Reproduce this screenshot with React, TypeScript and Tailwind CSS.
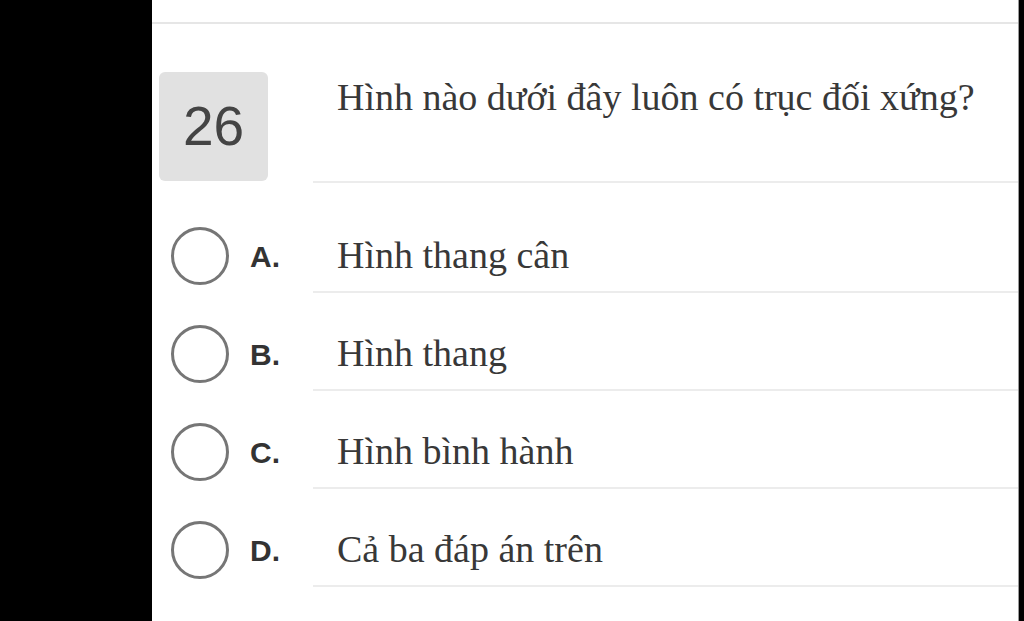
const options = [
  { label: "A.", text: "Hình thang cân" },
  { label: "B.", text: "Hình thang" },
  { label: "C.", text: "Hình bình hành" },
  { label: "D.", text: "Cả ba đáp án trên" },
];

export default function App() {
  return (
    <div className="flex h-[621px] w-[1024px] overflow-hidden bg-black">
      <div className="ml-[152px] h-full w-[867px] border-r border-[#9a9a9a] bg-white">
        {/* top strip */}
        <div className="h-[24px] border-b-2 border-[#e6e6e6]" />

        {/* question */}
        <div className="flex h-[159px]">
          <div className="w-[161px] pl-[7px] pt-[48px]">
            <div className="flex h-[109px] w-[109px] items-center justify-center rounded-md bg-[#e1e1e1] font-['Liberation_Sans',sans-serif] text-[55px] text-[#444]">
              26
            </div>
          </div>
          <div className="flex-1 border-b-2 border-[#ececec] pl-[24px] pt-[51px]">
            <p className="font-['Liberation_Serif',serif] text-[38px] leading-[44px] text-[#383838]">
              Hình nào dưới đây luôn có trục đối xứng?
            </p>
          </div>
        </div>

        {/* answers */}
        <div className="pt-[12px]">
          {options.map((o) => (
            <div key={o.label} className="flex h-[98px]">
              <div className="flex w-[161px] items-center pl-[19px] pt-[24px]">
                <span className="h-[58px] w-[58px] shrink-0 rounded-full border-[3px] border-[#767676]" />
                <span className="ml-[21px] font-['Liberation_Sans',sans-serif] text-[30px] font-bold text-[#333]">
                  {o.label}
                </span>
              </div>
              <div className="flex flex-1 items-center border-b-2 border-[#ececec] pl-[24px] pt-[24px]">
                <span className="font-['Liberation_Serif',serif] text-[38px] leading-[44px] text-[#383838]">
                  {o.text}
                </span>
              </div>
            </div>
          ))}
        </div>
      </div>
    </div>
  );
}
